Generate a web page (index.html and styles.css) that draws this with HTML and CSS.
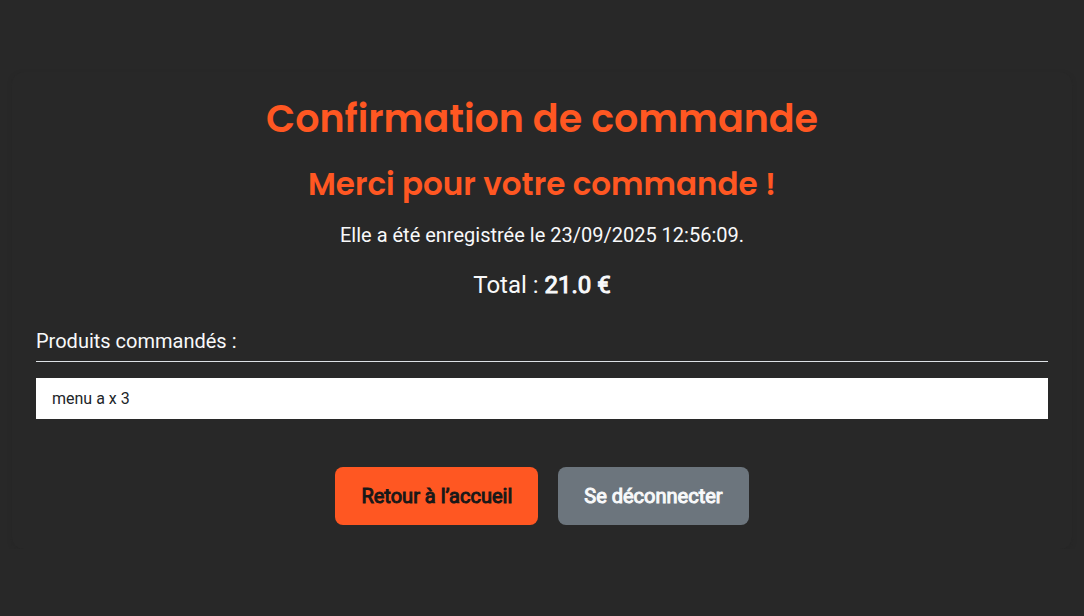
FILE: index.html
```html
<!DOCTYPE html>
<html lang="fr">
<head>
<meta charset="utf-8">
<meta name="viewport" content="width=device-width, initial-scale=1">
<title>Confirmation de commande</title>
<link rel="stylesheet" href="styles.css">
</head>
<body>
<main class="order">
  <header class="summary">
    <h1 class="page-title">Confirmation de commande</h1>
    <h2 class="thanks">Merci pour votre commande !</h2>
    <p class="recorded">Elle a été enregistrée le 23/09/2025 12:56:09.</p>
    <p class="total">Total : <strong>21.0 €</strong></p>
  </header>
  <section class="products">
    <h3 class="products-title">Produits commandés :</h3>
    <ul class="product-list">
      <li class="product">menu a x 3</li>
    </ul>
  </section>
  <nav class="actions">
    <a class="button button-home" href="#">Retour à l’accueil</a>
    <a class="button button-logout" href="#">Se déconnecter</a>
  </nav>
</main>
</body>
</html>
```
FILE: styles.css
```css
* {
  box-sizing: border-box;
}

body {
  margin: 0;
  background: #282828;
  color: #f8f9fa;
  font-family: Roboto, sans-serif;
  font-size: 16px;
  line-height: 24px;
}

h1, h2, h3, p, ul {
  margin: 0;
  padding: 0;
}

.order {
  margin: 72px 12px 0;
  padding: 24px;
  border-radius: 12px;
  background: #282828;
  box-shadow: 0 2px 4px #262626;
}

.summary {
  text-align: center;
}

.page-title,
.thanks {
  color: #ff5722;
  font-family: Poppins, Inter, sans-serif;
  font-weight: 600;
}

.page-title {
  font-size: 38px;
  line-height: 46px;
}

.thanks {
  margin-top: 24px;
  font-size: 31px;
  line-height: 36px;
}

.recorded {
  margin-top: 18px;
  font-size: 20px;
  line-height: 30px;
}

.total {
  margin-top: 17px;
  font-size: 24px;
  line-height: 36px;
}

.total strong {
  font-weight: 400;
  -webkit-text-stroke: 1px currentColor;
}

.products {
  margin-top: 26px;
}

.products-title {
  padding-bottom: 8px;
  border-bottom: 1px solid #dee2e6;
  font-size: 20px;
  font-weight: 400;
  line-height: 24px;
}

.product-list {
  margin-top: 16px;
  list-style: none;
}

.product {
  padding: 9px 16px 8px;
  background: #fff;
  color: #212529;
}

.actions {
  display: flex;
  flex-wrap: wrap;
  justify-content: center;
  gap: 20px;
  margin-top: 48px;
}

.button {
  padding: 14px 26px;
  border-radius: 8px;
  font-size: 20px;
  font-weight: 400;
  -webkit-text-stroke: 1px currentColor;
  line-height: 30px;
  text-decoration: none;
}

.button-home {
  background: #ff5722;
  color: #181818;
}

.button-logout {
  background: #6c757d;
  color: #f8f9fa;
}
```
